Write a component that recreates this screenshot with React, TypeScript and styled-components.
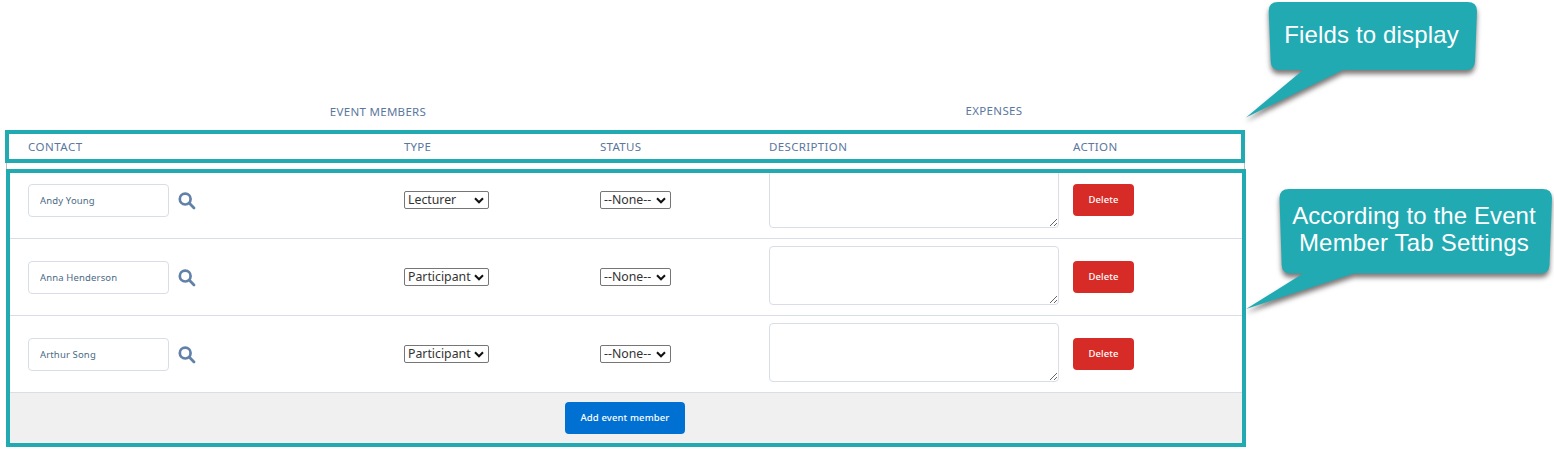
import React from "react";
import styled, { createGlobalStyle } from "styled-components";

const TEAL = "#22aab3";
const LINE = "#d8dde6";
const LABEL = "#5b77a0";

const GlobalStyle = createGlobalStyle`
  *, *::before, *::after { box-sizing: border-box; }
  html, body { margin: 0; background: #fff; overflow: hidden; }
`;

const Page = styled.main`
  position: relative;
  width: 1554px;
  height: 462px;
  padding-top: 94px;
  font-family: "Noto Sans", "Open Sans", sans-serif;
  color: ${LABEL};
`;

const GroupRow = styled.div`
  display: grid;
  grid-template-columns: 756px 476px;
  height: 36px;
`;

const GroupTitle = styled.div<{ $top: number; $spacing: number }>`
  padding-top: ${(p) => p.$top}px;
  text-align: center;
  font-size: 11.5px;
  line-height: 16px;
  letter-spacing: ${(p) => p.$spacing}px;
`;

const columns = "394px 196px 169px 304px 1fr";

const HeaderBox = styled.div`
  width: 1240px;
  height: 33px;
  margin-left: 5px;
  border: 4px solid ${TEAL};
  padding-left: 1px;
  display: grid;
  grid-template-columns: ${columns};
`;

const HeaderCell = styled.div<{ $indent?: number; $spacing: number }>`
  padding: 5px 0 0 ${(p) => p.$indent ?? 0}px;
  font-size: 11.5px;
  line-height: 16px;
  letter-spacing: ${(p) => p.$spacing}px;
`;

const Gap = styled.div`
  width: 1239px;
  height: 6px;
  margin-left: 6px;
  border: solid #bdbfc2;
  border-width: 0 1px;
`;

const BodyBox = styled.div`
  width: 1240px;
  height: 278px;
  margin-left: 6px;
  border: 4px solid ${TEAL};
  overflow: hidden;
  display: flex;
  flex-direction: column;
  justify-content: flex-end;
`;

const Row = styled.div`
  flex: none;
  height: 77px;
  border-bottom: 1px solid ${LINE};
  display: grid;
  grid-template-columns: ${columns};
  align-items: start;
`;

const ContactCell = styled.div`
  display: flex;
  gap: 9px;
  padding: 22px 0 0 18px;
`;

const Cell = styled.div<{ $top: number }>`
  display: flex;
  padding-top: ${(p) => p.$top}px;
`;

const ContactInput = styled.input`
  width: 141px;
  height: 33px;
  padding: 0 11px 1px;
  border: 1px solid ${LINE};
  border-radius: 4px;
  outline: 0;
  background: #fff;
  color: #4a6a86;
  font: 9.5px "Noto Sans", sans-serif;
  letter-spacing: 0.15px;
`;

const SearchIcon = styled.svg`
  width: 18px;
  height: 18px;
  margin-top: 8px;
`;

const SelectBox = styled.button<{ $width: number }>`
  width: ${(p) => p.$width}px;
  height: 18px;
  margin: 0;
  padding: 0 4px 0 3px;
  border: 1px solid #767676;
  border-radius: 2px;
  background: #fff;
  color: #333;
  font: 12.3px/16px "Noto Sans", sans-serif;
  display: flex;
  align-items: center;
  justify-content: space-between;
`;

const SelectValue = styled.span`
  height: 17px;
  line-height: 15px;
  white-space: nowrap;
`;

const Chevron = styled.svg`
  flex: none;
  width: 10px;
  height: 7px;
`;

const Description = styled.textarea`
  width: 290px;
  height: 59px;
  margin: 0;
  border: 1px solid ${LINE};
  border-radius: 4px;
  outline: 0;
  background: #fff;
`;

const Button = styled.button<{ $color: string; $width: number; $spacing: number }>`
  width: ${(p) => p.$width}px;
  height: 32px;
  padding: 0 0 2px;
  border: 0;
  border-radius: 4px;
  background: ${(p) => p.$color};
  color: #fff;
  font: 500 9.5px "Noto Sans", sans-serif;
  letter-spacing: ${(p) => p.$spacing}px;
`;

const Footer = styled.div`
  flex: none;
  height: 50px;
  padding: 9px 2px 0 0;
  background: #f0f0f0;
  display: flex;
  justify-content: center;
  align-items: flex-start;
`;

const Callout = styled.div<{ $left: number; $top: number; $width: number; $height: number }>`
  position: absolute;
  left: ${(p) => p.$left}px;
  top: ${(p) => p.$top}px;
  width: ${(p) => p.$width}px;
  height: ${(p) => p.$height}px;
`;

const Bubble = styled.svg`
  position: absolute;
  inset: 0;
  width: 100%;
  height: 100%;
  overflow: visible;
  filter: drop-shadow(0px 4px 2.5px rgba(20, 10, 10, 0.55));
`;

const CalloutText = styled.div<{ $top: number; $left: number }>`
  position: relative;
  padding: ${(p) => p.$top}px 0 0 ${(p) => p.$left}px;
  color: #fff;
  font: 24px/27px "Liberation Sans", Arial, sans-serif;
  text-align: center;
  white-space: nowrap;
`;

const Line = styled.div<{ $spacing: number }>`
  letter-spacing: ${(p) => p.$spacing}px;
`;

const members = [
  { name: "Andy Young", type: "Lecturer" },
  { name: "Anna Henderson", type: "Participant" },
  { name: "Arthur Song", type: "Participant" },
];

function Select({ value, width }: { value: string; width: number }) {
  return (
    <SelectBox $width={width} type="button" aria-haspopup="listbox">
      <SelectValue>{value}</SelectValue>
      <Chevron viewBox="0 0 10 7" fill="none" stroke="#111">
        <path d="M1 1.300 5 5.200 9 1.300" strokeWidth="2.1" />
      </Chevron>
    </SelectBox>
  );
}

function MemberRow({ name, type }: { name: string; type: string }) {
  return (
    <Row>
      <ContactCell>
        <ContactInput defaultValue={name} />
        <SearchIcon viewBox="0 0 18 18" fill="none" stroke="#6281a8">
          <circle cx="7.2" cy="7.1" r="5.4" strokeWidth="2.7" />
          <path d="M11.4 11.3 16 15.900" strokeWidth="2.8" strokeLinecap="round" />
        </SearchIcon>
      </ContactCell>
      <Cell $top={29}>
        <Select width={85} value={type} />
      </Cell>
      <Cell $top={29}>
        <Select width={71} value="--None--" />
      </Cell>
      <Cell $top={7}>
        <Description />
      </Cell>
      <Cell $top={22}>
        <Button $color="#d62b26" $width={61} $spacing={0.1}>Delete</Button>
      </Cell>
    </Row>
  );
}

export default function App() {
  return (
    <Page>
      <GlobalStyle />
      <GroupRow>
        <GroupTitle $top={10} $spacing={0.3}>EVENT MEMBERS</GroupTitle>
        <GroupTitle $top={9} $spacing={0.35}>EXPENSES</GroupTitle>
      </GroupRow>
      <HeaderBox>
        <HeaderCell $indent={18} $spacing={0.5}>CONTACT</HeaderCell>
        <HeaderCell $spacing={0.2}>TYPE</HeaderCell>
        <HeaderCell $spacing={0.3}>STATUS</HeaderCell>
        <HeaderCell $spacing={0.35}>DESCRIPTION</HeaderCell>
        <HeaderCell $spacing={0.35}>ACTION</HeaderCell>
      </HeaderBox>
      <Gap />
      <BodyBox>
        {members.map((m) => (
          <MemberRow key={m.name} {...m} />
        ))}
        <Footer>
          <Button $color="#0070d2" $width={120} $spacing={0.12}>Add event member</Button>
        </Footer>
      </BodyBox>

      <Callout $left={1246} $top={0} $width={234} $height={120}>
        <Bubble viewBox="0 0 234 120">
          <path
            fill={TEAL}
            d="M32 2H221.500Q231 2 231 11L229 61.500Q228.500 70 220.500 70H97L0 117.500 57 70H33.500Q25 70 24.700 61.500L22.700 11Q22.700 2 32 2Z"
          />
        </Bubble>
        <CalloutText $top={21} $left={17}>
          <Line $spacing={0.15}>Fields to display</Line>
        </CalloutText>
      </Callout>

      <Callout $left={1246} $top={187} $width={308} $height={125}>
        <Bubble viewBox="0 0 308 125">
          <path
            fill={TEAL}
            d="M43 2H296.500Q306 2 306 11L303.500 78Q303 86.500 295 86.500H108L0 122 57 86.500H44.500Q36 86.500 35.700 78L33.500 11Q33.500 2 43 2Z"
          />
        </Bubble>
        <CalloutText $top={15} $left={28}>
          <Line $spacing={0.1}>According to the Event</Line>
          <Line $spacing={0.2}>Member Tab Settings</Line>
        </CalloutText>
      </Callout>
    </Page>
  );
}
